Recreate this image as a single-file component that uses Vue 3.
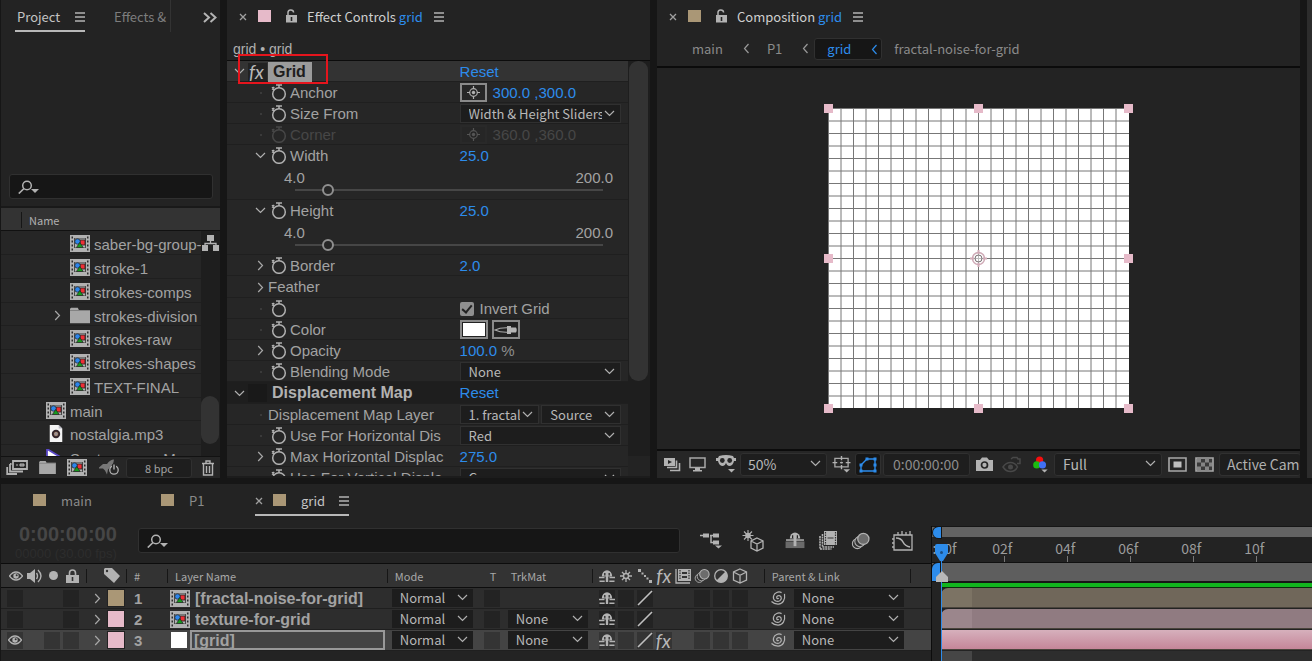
<script setup>
import { ref } from 'vue'

const files = [
  { name: 'saber-bg-group-', icon: 'comp', level: 2 },
  { name: 'stroke-1', icon: 'comp', level: 2 },
  { name: 'strokes-comps', icon: 'comp', level: 2 },
  { name: 'strokes-division', icon: 'folder', level: 2, twirl: true },
  { name: 'strokes-raw', icon: 'comp', level: 2 },
  { name: 'strokes-shapes', icon: 'comp', level: 2 },
  { name: 'TEXT-FINAL', icon: 'comp', level: 2 },
  { name: 'main', icon: 'comp', level: 1 },
  { name: 'nostalgia.mp3', icon: 'audio', level: 1 },
  { name: 'Spetsommer_Mum', icon: 'video', level: 1 }
]

const effects = [
  { label: 'Grid', kind: 'head', open: true, selected: true },
  { label: 'Anchor', kind: 'point', value: '300.0 ,300.0', watch: true },
  { label: 'Size From', kind: 'select', options: ['Width & Height Sliders'], watch: true },
  { label: 'Corner', kind: 'point', value: '360.0 ,360.0', watch: true, off: true },
  { label: 'Width', kind: 'slider', value: '25.0', watch: true, twirl: 'down' },
  { label: 'Height', kind: 'slider', value: '25.0', watch: true, twirl: 'down' },
  { label: 'Border', kind: 'number', value: '2.0', watch: true, twirl: 'right' },
  { label: 'Feather', kind: 'group', twirl: 'right' },
  { label: '', kind: 'check', value: 'Invert Grid', watch: true },
  { label: 'Color', kind: 'color', watch: true },
  { label: 'Opacity', kind: 'number', value: '100.0', unit: '%', watch: true, twirl: 'right' },
  { label: 'Blending Mode', kind: 'select', options: ['None'], watch: true },
  { label: 'Displacement Map', kind: 'head' },
  { label: 'Displacement Map Layer', kind: 'select', options: ['1. fractal-noise', 'Source'] },
  { label: 'Use For Horizontal Dis', kind: 'select', options: ['Red'], watch: true },
  { label: 'Max Horizontal Displac', kind: 'number', value: '275.0', watch: true, twirl: 'right' },
  { label: 'Use For Vertical Displa', kind: 'select', options: ['Green'], watch: true }
]

const layers = [
  { n: 1, name: '[fractal-noise-for-grid]', color: 'tan', matte: false },
  { n: 2, name: 'texture-for-grid', color: 'pink', matte: true },
  { n: 3, name: '[grid]', color: 'pink', matte: true, solid: true, active: true }
]

const gridLines = Array.from({ length: 24 }, (_, i) => i * 12.5)
const handles = [
  [4, 4], [154, 4], [304, 4], [4, 154], [304, 154], [4, 304], [154, 304], [304, 304]
]
const frames = ['02f', '04f', '06f', '08f', '10f']
const invert = ref(true)
const sliders = ref({ Width: 25, Height: 25 })
</script>

<template>
  <svg class="defs" aria-hidden="true">
    <symbol id="i-comp" viewBox="0 0 20 17">
      <rect width="20" height="17" fill="#b2b2b2" />
      <path d="M1.5 1.500h1.500v2h-1.500zM1.500 5.500h1.500v2h-1.500zM1.500 9.500h1.500v2h-1.500zM1.500 13.500h1.500v2h-1.500zM17 1.500h1.500v2h-1.500zM17 5.500h1.500v2h-1.500zM17 9.500h1.500v2h-1.500zM17 13.500h1.500v2h-1.500z" fill="#2c2c2c" />
      <path d="M4.500 3v10M15.500 3v10" stroke="#4a4a4a" />
      <path d="M5 3.500h10M5 12.500h10" stroke="#777" />
      <rect x="10" y="5" width="5" height="5" fill="#ee2f35" stroke="#222" stroke-width=".8" />
      <circle cx="7.500" cy="6.500" r="2.700" fill="#2d86ea" stroke="#222" stroke-width=".7" />
      <path d="M9.800 7.500 13.200 12.500H6.400z" fill="#159a1c" stroke="#222" stroke-width=".7" />
    </symbol>
    <symbol id="i-folder" viewBox="0 0 18 14">
      <path d="M1 0h6l1 2h10v12H0V1z" fill="#a8a8a8" />
      <path d="M0 2.500h18" stroke="#777" stroke-width=".7" />
    </symbol>
    <symbol id="i-audio" viewBox="0 0 20 19">
      <path d="M3 0h10l4 4v15H3z" fill="#f4f4f4" />
      <path d="M13 0v4h4z" fill="#b9b9c4" />
      <circle cx="10" cy="10" r="4.700" fill="#33252c" />
      <circle cx="10" cy="10" r="2.200" fill="#dcd5d8" stroke="#7d5a3f" stroke-width=".8" />
      <circle cx="10" cy="10" r=".8" fill="#33252c" />
    </symbol>
    <symbol id="i-video" viewBox="0 0 20 17">
      <path d="M1 0v17l15-8z" fill="#fff" stroke="#5a48c8" stroke-width="1.800" />
    </symbol>
    <symbol id="i-down" viewBox="0 0 11 7"><path d="M1 1l4.500 4.500L10 1" fill="none" stroke="currentColor" stroke-width="1.200" /></symbol>
    <symbol id="i-right" viewBox="0 0 7 11"><path d="M1.200 1l4.300 4.500L1.200 10" fill="none" stroke="currentColor" stroke-width="1.200" /></symbol>
    <symbol id="i-left" viewBox="0 0 7 11"><path d="M5.500 1L1.500 5.500 5.500 10" fill="none" stroke="currentColor" stroke-width="1.200" /></symbol>
    <symbol id="i-menu" viewBox="0 0 10 10"><path d="M0 1h10M0 5h10M0 9h10" stroke="currentColor" stroke-width="1.300" /></symbol>
    <symbol id="i-close" viewBox="0 0 8 8"><path d="M1 1l6 6M7 1L1 7" stroke="currentColor" stroke-width="1.300" /></symbol>
    <symbol id="i-search" viewBox="0 0 22 14">
      <circle cx="9" cy="5.500" r="4.300" fill="none" stroke="currentColor" stroke-width="1.500" />
      <path d="M6 8.500L.8 13.500" stroke="currentColor" stroke-width="1.700" />
      <path d="M13 9h8l-4 4z" fill="currentColor" />
    </symbol>
    <symbol id="i-unlock" viewBox="0 0 12 14">
      <path d="M3 6V4a2.800 2.800 0 0 1 5.600-.5" fill="none" stroke="currentColor" stroke-width="1.500" />
      <rect x="1" y="6" width="11" height="7.500" fill="currentColor" />
      <path d="M6.500 8v4" stroke="#232323" stroke-width="1.600" />
    </symbol>
    <symbol id="i-watch" viewBox="0 0 16 17">
      <circle cx="8" cy="10" r="6.300" fill="none" stroke="currentColor" stroke-width="1.500" />
      <path d="M5 .9h6M8 1v3M1 3.300l2.500 2.300M1 5.500l2.200-2.500" fill="none" stroke="currentColor" stroke-width="1.500" />
    </symbol>
    <symbol id="i-target" viewBox="0 0 15 15">
      <circle cx="7.500" cy="7.500" r="3.800" fill="none" stroke="currentColor" stroke-width="1.200" />
      <circle cx="7.500" cy="7.500" r="1.700" fill="currentColor" />
      <path d="M7.500 1v3M7.500 11v3M1 7.500h3M11 7.500h3" stroke="currentColor" stroke-width="1.200" />
    </symbol>
    <symbol id="i-eye" viewBox="0 0 14 10">
      <path d="M.5 5Q3.500 1 7 1t6.500 4Q10.500 9 7 9T.5 5z" fill="none" stroke="currentColor" stroke-width="1.300" />
      <circle cx="7" cy="5" r="2.700" fill="currentColor" />
      <circle cx="7.700" cy="4.300" r="1" fill="#333" />
    </symbol>
    <symbol id="i-shy" viewBox="0 0 16 13">
      <path d="M2.800 7a5.200 6.300 0 0 1 10.400 0z" fill="currentColor" />
      <path d="M0 8h5.500M10.500 8H16M.5 11.700h5.200M10.300 11.700h5.200" stroke="currentColor" stroke-width="1.400" />
      <path d="M8 6v6.500" stroke="currentColor" stroke-width="2.400" />
      <path d="M5.800 3.500v2.600M10.200 3.500v2.600" stroke="#303030" stroke-width="1.400" />
    </symbol>
    <symbol id="i-whip" viewBox="0 0 16 16">
      <path d="M8.800 8.300C7 9.600 5.600 7 7.800 5.800c3-1.200 4.700 2.500 2.400 4.600-3.200 2.600-7.600-.2-6.700-4.300C4.400 2.600 8.500 1 11.600 2.600M14.500 3.800c1 6-1.800 10.200-6.200 10.300-2.800.1-5.300-1.100-6.800-2.600" fill="none" stroke="currentColor" stroke-width="1.200" />
    </symbol>
    <symbol id="i-motion" viewBox="0 0 18 16">
      <circle cx="6" cy="10.500" r="4.700" fill="#333" stroke="currentColor" />
      <circle cx="8.500" cy="8.500" r="4.900" fill="#333" stroke="currentColor" />
      <circle cx="11.700" cy="6" r="5.300" fill="#6c6c6c" stroke="currentColor" stroke-width="1.200" />
    </symbol>
    <symbol id="i-cube" viewBox="0 0 16 16">
      <path d="M8 1l6.500 3v8L8 15l-6.500-3V4zM1.500 4L8 7.300 14.500 4M8 7.300V15" fill="none" stroke="currentColor" stroke-width="1.300" />
    </symbol>
  </svg>

  <main class="app">
    <div class="top">
      <section class="panel project" aria-label="Project">
        <nav class="tabs">
          <button class="tab on">Project <svg class="menu"><use href="#i-menu" /></svg></button>
          <button class="tab dim">Effects &amp;</button>
          <button class="more" aria-label="More panels">
            <svg viewBox="0 0 14 11"><path d="M1 1l5 4.500L1 10M7.500 1l5 4.500-5 4.500" fill="none" stroke="#b4b4b4" stroke-width="2" /></svg>
          </button>
        </nav>
        <label class="search psearch">
          <svg><use href="#i-search" /></svg>
          <input type="text" aria-label="Search project" />
        </label>
        <div class="phead"><span>Name</span></div>
        <div class="plist">
          <ul>
            <li v-for="f in files" :key="f.name" :class="'lv' + f.level">
              <span class="ptw"><svg v-if="f.twirl" class="right"><use href="#i-right" /></svg></span>
              <svg class="pic"><use :href="'#i-' + f.icon" /></svg>
              <span class="pname">{{ f.name }}</span>
            </li>
          </ul>
          <div class="pscroll">
            <svg class="flow" viewBox="0 0 17 16"><path d="M5 0h7v6H5zM0 10h6v6H0zM11 10h6v6h-6z" fill="#b2b2b2" /><path d="M8.500 6v2.500M3 11V8.500h11V11" fill="none" stroke="#b2b2b2" stroke-width="1.300" /></svg>
            <i class="pthumb"></i>
          </div>
        </div>
        <div class="pfoot">
          <button aria-label="Interpret footage"><svg class="w22" viewBox="0 0 22 16"><path d="M7 1.500h14v8H7z" fill="#262626" stroke="#b2b2b2" stroke-width="1.800" /><path d="M10 5.500h2M14 4.500h4v2h-4z" fill="#777" stroke="#b2b2b2" /><path d="M4 4.500h1.500M4 4.500V12h13M1.200 7.500v7H11" fill="none" stroke="#b2b2b2" stroke-width="1.800" /></svg></button>
          <button aria-label="New folder"><svg class="fold"><use href="#i-folder" /></svg></button>
          <button aria-label="New composition"><svg class="pic"><use href="#i-comp" /></svg></button>
          <button aria-label="Project settings"><svg class="w22" viewBox="0 0 22 16"><path d="M1 8l4-3.500h4Q12 0 16 0q0 4-3 7l-3 3-1 5-2-4-2-2-4 0z" fill="#777" /><circle cx="16" cy="10.500" r="4.200" fill="#262626" stroke="#b2b2b2" stroke-width="1.300" /><path d="M16 5v6" stroke="#262626" stroke-width="4" /><path d="M16 5v5" stroke="#b2b2b2" stroke-width="1.400" /></svg></button>
          <button class="bpc">8 bpc</button>
          <button aria-label="Delete"><svg class="trash" viewBox="0 0 14 16"><path d="M1 3.500h12M5 3V1h4v2M2.500 4v11h9V4M5.500 6v7M8.500 6v7" fill="none" stroke="#b2b2b2" stroke-width="1.400" /></svg></button>
        </div>
      </section>

      <section class="panel controls" aria-label="Effect Controls">
        <header class="title">
          <svg class="x"><use href="#i-close" /></svg><i class="sw pink"></i>
          <svg class="lock"><use href="#i-unlock" /></svg>
          <h2>Effect Controls <b>grid</b></h2>
          <svg class="menu"><use href="#i-menu" /></svg>
        </header>
        <p class="path">grid • grid</p>
        <div class="body">
          <div class="rows">
            <div v-for="(e, i) in effects" :key="i" class="row" :class="[e.kind, { off: e.off, selected: e.selected }]">
              <div class="lab">
                <template v-if="e.kind === 'head'">
                  <svg class="down"><use href="#i-down" /></svg>
                  <span class="fxbox"><em v-if="e.selected" class="fx">fx</em></span>
                  <strong>{{ e.label }}</strong>
                </template>
                <template v-else>
                  <span class="tw">
                    <svg v-if="e.twirl" :class="e.twirl"><use :href="'#i-' + e.twirl" /></svg>
                    <i v-else class="dot"></i>
                  </span>
                  <svg v-if="e.watch" class="watch"><use href="#i-watch" /></svg>
                  <span class="lt">{{ e.label }}</span>
                </template>
              </div>
              <div class="val">
                <button v-if="e.kind === 'head'" class="blue">Reset</button>
                <template v-else-if="e.kind === 'point'">
                  <button class="tgt" :aria-label="e.label + ' point'"><svg><use href="#i-target" /></svg></button>
                  <span class="blue">{{ e.value }}</span>
                </template>
                <template v-else-if="e.kind === 'select'">
                  <span v-for="o in e.options" :key="o" class="drop">
                    <select :aria-label="e.label"><option>{{ o }}</option></select>
                    <svg class="down"><use href="#i-down" /></svg>
                  </span>
                </template>
                <label v-else-if="e.kind === 'check'" class="chk"><input v-model="invert" type="checkbox" />{{ e.value }}</label>
                <template v-else-if="e.kind === 'color'">
                  <button class="chip" aria-label="Color"></button>
                  <button class="chip drp" aria-label="Eyedropper"><svg viewBox="0 0 24 10"><path d="M1 5q5-2.500 13-2.200v4.400Q6 7.500 1 5z" fill="none" stroke="#aaa" stroke-width="1.200" /><path d="M13 1h4v1.500h5q1.500 2.500 0 5h-5V9h-4z" fill="#b5b5b5" /></svg></button>
                </template>
                <template v-else><span class="blue">{{ e.value }}</span><span v-if="e.unit" class="unit">{{ e.unit }}</span></template>
              </div>
              <div v-if="e.kind === 'slider'" class="slide">
                <span>4.0</span><span>200.0</span>
                <input v-model="sliders[e.label]" type="range" min="4" max="200" :aria-label="e.label" />
              </div>
            </div>
          </div>
          <div class="escroll"><i></i></div>
        </div>
        <div class="mark"></div>
      </section>

      <section class="panel comp" aria-label="Composition">
        <header class="title">
          <svg class="x"><use href="#i-close" /></svg><i class="sw tan"></i>
          <svg class="lock"><use href="#i-unlock" /></svg>
          <h2>Composition <b>grid</b></h2>
          <svg class="menu"><use href="#i-menu" /></svg>
        </header>
        <nav class="crumbs">
          <a href="#main">main</a><svg><use href="#i-left" /></svg>
          <a href="#p1">P1</a><svg class="last"><use href="#i-left" /></svg>
          <a href="#grid" class="cur">grid<svg><use href="#i-left" /></svg></a>
          <a href="#noise">fractal-noise-for-grid</a>
        </nav>
        <div class="view">
          <svg class="canvas" viewBox="0 0 309 309">
            <rect x="4" y="4" width="301" height="300" fill="#fff" />
            <g v-for="g in gridLines" :key="g">
              <path :d="`M${g + 4.5} 4v300M4 ${g + 4.5}h301`" stroke="#777" />
            </g>
            <rect v-for="(h, i) in handles" :key="i" :x="h[0] - 4" :y="h[1] - 4" width="9" height="9" fill="#e6bac9" />
            <g fill="none" stroke="#cfaab6">
              <circle cx="154.500" cy="154.500" r="6" fill="#fff" fill-opacity=".5" stroke-width="1.500" />
              <circle cx="154.500" cy="154.500" r="3.500" stroke="#776d70" />
              <path d="M154.500 146v4M154.500 159v4M146 154.500h4M159 154.500h4" stroke-width="2" />
            </g>
          </svg>
        </div>
        <div class="vfoot">
          <svg class="w17" viewBox="0 0 17 15"><path d="M0 1h11v8H0z" fill="#b2b2b2" /><path d="M4 3l4 2-4 2z" fill="#262626" /><path d="M12.500 3.500v7H3M15.500 6v7.500H6" fill="none" stroke="#b2b2b2" stroke-width="1.600" /></svg>
          <svg class="w17" viewBox="0 0 17 15"><path d="M1 1h15v9.500H1z" fill="none" stroke="#a8a8a8" stroke-width="1.500" /><path d="M6 11h5v2h2v1.500H4V13h2z" fill="#b2b2b2" /></svg>
          <svg class="w20" viewBox="0 0 20 18"><path d="M3 1q7-2 14 0l1 2h2v3h-2q-1 5-5 5-2 0-3-3-1 3-3 3-4 0-5-5H0V3h2z" fill="#b2b2b2" /><circle cx="6.300" cy="5.500" r="2.400" fill="#262626" /><circle cx="13.700" cy="5.500" r="2.400" fill="#262626" /><path d="M12 14h7l-3.500 3.500z" fill="#b2b2b2" /></svg>
          <span class="vdrop zoom"><select aria-label="Magnification"><option>50%</option></select><svg class="down"><use href="#i-down" /></svg></span>
          <svg class="w19" viewBox="0 0 19 18"><path d="M2.500 2.500h14v9h-14z" fill="none" stroke="#a8a8a8" stroke-width="1.400" /><path d="M9.500 0v4.500M9.500 6v2M9.500 9.500V14M0 7h5M8 7h3M14 7h5" stroke="#b2b2b2" stroke-width="1.500" /><path d="M11.500 14h7L15 17.500z" fill="#b2b2b2" /></svg>
          <button class="mask" aria-label="Mask visibility"><svg viewBox="0 0 18 16"><path d="M2 14V8l6-6h8v12z" fill="none" stroke="#2d8ceb" stroke-width="1.400" /><path d="M.5 6.500h3v3h-3zM.5 12.500h3v3h-3zM6.500.5h3v3h-3zM14.500.5h3v3h-3zM14.500 12.500h3v3h-3zM14.500 6.500h3v3h-3z" fill="#2d8ceb" /></svg></button>
          <button class="time">0:00:00:00</button>
          <svg class="w19 cam" viewBox="0 0 19 15"><path d="M1 3h4l2-2.500h5L14 3h4v11H1z" fill="#b2b2b2" /><circle cx="9.500" cy="8" r="3" fill="none" stroke="#262626" stroke-width="1.700" /></svg>
          <svg class="w19 ghost" viewBox="0 0 19 16"><path d="M1 10.500Q4 6 8.500 6t7 4.500Q13 15 8.500 15T1 10.500z" fill="none" stroke="#484848" stroke-width="1.500" /><circle cx="8.500" cy="10.500" r="2.500" fill="#484848" /><path d="M9 2.500l2-1.500h4l1 1.500h2V7h-3" fill="none" stroke="#484848" stroke-width="1.500" /></svg>
          <svg class="w17" viewBox="0 0 17 19"><circle cx="7.500" cy="4.500" r="4" fill="#f60e0e" /><circle cx="4.300" cy="10" r="4" fill="#1dbb10" /><circle cx="10.700" cy="10" r="4" fill="#4070f4" /><path d="M9.500 15h7L13 18.500z" fill="#b2b2b2" /></svg>
          <span class="vdrop full"><select aria-label="Resolution"><option>Full</option></select><svg class="down"><use href="#i-down" /></svg></span>
          <svg class="w19" viewBox="0 0 19 16"><path d="M1 1.500h17v13H1z" fill="none" stroke="#a8a8a8" stroke-width="1.600" /><path d="M5.500 5h8v6h-8z" fill="#c0c0c0" /></svg>
          <svg class="w19" viewBox="0 0 19 16"><path d="M1 1.500h17v13H1z" fill="#3a3a3a" stroke="#a8a8a8" stroke-width="1.600" /><path d="M2 2h4v4H2zM10 2h4v4h-4zM6 6h4v4H6zM14 6h3v4h-3zM2 10h4v4H2zM10 10h4v4h-4z" fill="#858585" /></svg>
          <button class="camera">Active Camera</button>
        </div>
      </section>
      <aside class="panel sliver"></aside>
    </div>

    <section class="panel timeline" aria-label="Timeline">
      <nav class="ttabs">
        <button class="t1"><i class="sw tan"></i>main</button>
        <button class="t2"><i class="sw tan"></i>P1</button>
        <button class="t3 on"><svg class="x"><use href="#i-close" /></svg><i class="sw tan"></i>grid<svg class="menu"><use href="#i-menu" /></svg></button>
      </nav>
      <div class="tmain">
        <div class="tleft">
          <div class="tbar">
            <div class="clock"><strong>0:00:00:00</strong><small>00000 (30.00 fps)</small></div>
            <label class="search tsearch"><svg><use href="#i-search" /></svg><input type="text" aria-label="Search layers" /></label>
            <div class="tools">
              <svg class="w22" viewBox="0 0 22 16"><path d="M0 3h4M10 3h4M11 3v7h3" fill="none" stroke="#b2b2b2" stroke-width="1.500" /><path d="M3 1h6v4H3zM13 1h6v4h-6zM13 8h6v4h-6zM15 13h7l-3.500 3z" fill="#b2b2b2" /></svg>
              <svg class="cubes" viewBox="0 0 22 22"><path d="M6 0v11M.5 5.500h11M2 1.500l8 8M10 1.500l-8 8" stroke="#b2b2b2" stroke-width="1.100" /><circle cx="6" cy="5.500" r="2.800" fill="#b2b2b2" /><path d="M15 8l6 3v7l-6 3-6-3v-7zM9 11l6 3 6-3M15 14v7" fill="#232323" stroke="#b2b2b2" stroke-width="1.300" /></svg>
              <svg class="w22" viewBox="0 0 22 18"><path d="M1 10h20v7H1z" fill="#6a6a6a" /><path d="M5.500 7a5.500 6.500 0 0 1 11 0z" fill="#b2b2b2" /><path d="M1.500 8.500h19" stroke="#b2b2b2" stroke-width="1.600" /><path d="M11 6v9" stroke="#b2b2b2" stroke-width="3" /><path d="M8.500 3.500v3M13.500 3.500v3" stroke="#232323" stroke-width="1.300" /></svg>
              <svg class="films" viewBox="0 0 18 19"><rect x="5" width="13" height="14" fill="#b2b2b2" /><path d="M6.500 1v13M16.500 1v13" stroke="#333" stroke-width="1.200" stroke-dasharray="1.500 1" /><path d="M8.500 7h6" stroke="#333" /><path d="M3.500 3v13H15M1 5v13h11.500" fill="none" stroke="#b2b2b2" stroke-width="1.600" stroke-dasharray="2 .6" /></svg>
              <svg class="blur"><use href="#i-motion" /></svg>
              <svg class="graph" viewBox="0 0 22 20"><path d="M2 4h18v15H2zM0 8h2M0 12h2M0 16h2M6 1v3M10 0v4M14 1v3M18 0v4" fill="none" stroke="#b2b2b2" stroke-width="1.300" /><path d="M4 7q5 0 7 4t7 5" fill="none" stroke="#b2b2b2" stroke-width="1.600" /></svg>
            </div>
          </div>
          <table>
            <thead>
              <tr>
                <th class="av">
                  <svg class="eye"><use href="#i-eye" /></svg>
                  <svg class="spk" viewBox="0 0 16 14"><path d="M0 4h3l5-4v14l-5-4H0z" fill="#b2b2b2" /><path d="M9.500 4q2 3 0 6M11 1q6 6 0 12" fill="none" stroke="#b2b2b2" stroke-width="1.400" /></svg>
                  <i class="solo"></i>
                  <svg class="plock" viewBox="0 0 13 14"><path d="M3.500 6V4a3 3 0 0 1 6 0v2" fill="none" stroke="#b2b2b2" stroke-width="1.600" /><path d="M0 6h13v8H0z" fill="#b2b2b2" /><path d="M6.500 8v4" stroke="#333" stroke-width="1.600" /></svg>
                </th>
                <th class="sep"><svg class="tag" viewBox="0 0 16 15"><path d="M0 1l1-1h7l8 8-6 7-10-9z" fill="#b2b2b2" /><circle cx="3" cy="3" r="1.200" fill="#333" /></svg></th>
                <th class="sep num">#</th>
                <th class="sep">Layer Name</th>
                <th class="sep">Mode</th>
                <th class="mid">T</th>
                <th>TrkMat</th>
                <th class="sep sws">
                  <svg><use href="#i-shy" /></svg>
                  <svg viewBox="0 0 16 16"><circle cx="8" cy="8" r="2.500" fill="none" stroke="#b2b2b2" stroke-width="1.400" /><path d="M8 2v3M8 11v3M2 8h3M11 8h3M4 4l2 2M10 10l2 2M12 4l-2 2M6 10l-2 2" stroke="#b2b2b2" stroke-width="1.300" /></svg>
                  <svg viewBox="0 0 16 16"><path d="M1 1h3v3H1zM4.500 4.500h2v2h-2zM7 7h2v2H7zM9.500 9.500h2v2h-2zM12 12h3v3h-3z" fill="#b2b2b2" /></svg>
                  <em class="fx">fx</em>
                  <svg viewBox="0 0 16 16"><path d="M1 1v14h14" fill="none" stroke="#b2b2b2" stroke-width="1.300" /><path d="M3 1h13v12H3z" fill="#b2b2b2" /><path d="M5 2v10M14 2v10" stroke="#333" stroke-dasharray="1.500 1" stroke-width="1.200" /><path d="M7 4h5v2H7zM7 8h5v2H7z" fill="#333" /></svg>
                  <svg><use href="#i-motion" /></svg>
                  <svg viewBox="0 0 16 16"><circle cx="8" cy="8" r="6.300" fill="none" stroke="#b2b2b2" stroke-width="1.300" /><path d="M12.500 3.500a6.300 6.300 0 1 1-9 9z" fill="#b2b2b2" /></svg>
                  <svg><use href="#i-cube" /></svg>
                </th>
                <th class="sep">Parent &amp; Link</th>
                <th class="sep"></th>
              </tr>
            </thead>
            <tbody>
              <tr v-for="l in layers" :key="l.n" :class="{ active: l.active }">
                <td class="avb"><i class="box"><svg v-if="l.active" class="eye"><use href="#i-eye" /></svg></i><i class="box" :class="{ none: !l.active }"></i><i class="box"></i></td>
                <td class="tsw"><svg class="right"><use href="#i-right" /></svg><i class="lsw" :class="l.color"></i></td>
                <td class="n">{{ l.n }}</td>
                <td class="lname"><i v-if="l.solid" class="solid"></i><svg v-else class="pic"><use href="#i-comp" /></svg><span>{{ l.name }}</span></td>
                <td><span class="drop"><select aria-label="Mode"><option>Normal</option></select><svg class="down"><use href="#i-down" /></svg></span></td>
                <td><i class="box"></i></td>
                <td><span v-if="l.matte" class="drop"><select aria-label="Track matte"><option>None</option></select><svg class="down"><use href="#i-down" /></svg></span></td>
                <td class="sws">
                  <i class="box"><svg><use href="#i-shy" /></svg></i><i class="box"></i>
                  <i class="box"><svg viewBox="0 0 16 16"><path d="M1 15L15 1" stroke="#c0c0c0" stroke-width="1.600" /></svg></i>
                  <i class="box" :class="{ none: !l.active }"><em v-if="l.active" class="fx">fx</em></i><i class="box none"></i>
                  <i class="box"></i><i class="box"></i><i class="box"></i>
                </td>
                <td class="par"><svg class="whip"><use href="#i-whip" /></svg><span class="drop"><select aria-label="Parent"><option>None</option></select><svg class="down"><use href="#i-down" /></svg></span></td>
                <td></td>
              </tr>
            </tbody>
          </table>
        </div>

        <div class="tright">
          <div class="navbar"><i></i></div>
          <div class="ruler"><span class="zero">0:00f</span><span v-for="f in frames" :key="f" class="fr">{{ f }}</span></div>
          <div class="work"><i></i></div>
          <div class="green"></div>
          <div class="bar b1"></div>
          <div class="bar b2"></div>
          <div class="bar b3"></div>
          <div class="rest"></div>
          <svg class="phead-icon" viewBox="0 0 13 18"><path d="M0 2q0-2 2-2h9q2 0 2 2v7l-5 8H5L0 9z" fill="#2d8ceb" /><circle cx="6.500" cy="8.500" r="1.500" fill="#1b4f86" /></svg>
          <i class="playline"></i>
          <svg class="pin" viewBox="0 0 12 11"><path d="M0 6l6-6 6 6v5H0z" fill="#b8b8b8" /></svg>
        </div>
      </div>
    </section>
  </main>
</template>

<style>
body { margin: 0; background: #161616; }
</style>

<style scoped>
* { box-sizing: border-box; }
.defs { position: absolute; width: 0; height: 0; }
.app { display: flex; flex-direction: column; gap: 6px; height: 100vh; min-height: 400px; padding-left: 1px; overflow: hidden; background: #161616; color: #a2a2a2; font: 13px/20px "Noto Sans CJK SC", "Noto Sans", sans-serif; }
button, input, select { font: inherit; color: inherit; background: none; border: 0; margin: 0; padding: 0; border-radius: 0; text-align: left; }
button { white-space: nowrap; }
svg { display: block; flex: none; }
.top { flex: 1; min-height: 0; display: grid; grid-template-columns: 219fr 423fr 643fr 5px; gap: 7px; }
.panel { background: #232323; min-width: 0; min-height: 0; position: relative; }
.top > .panel { display: flex; flex-direction: column; overflow: hidden; }
.menu { width: 10px; height: 10px; color: #b2b2b2; }
.x { width: 8px; height: 8px; color: #a0a0a0; }
.down { width: 11px; height: 7px; color: #b0b0b0; }
.right { width: 7px; height: 11px; color: #a8a8a8; }
.sw { width: 13px; height: 12px; }
.pink { background: #e6bac9; }
.tan { background: #aa9776; }
.w22 { width: 22px; height: 17px; }
.w20 { width: 20px; height: 18px; }
.w19 { width: 19px; height: 17px; }
.w17 { width: 17px; height: 17px; }
.pic { width: 20px; height: 17px; }
.fx { font: italic 19px/18px Lato, sans-serif; color: #b8b8b8; }
.drop, .vdrop { position: relative; display: flex; min-width: 0; background: #1d1d1d; color: #b8b8b8; }
select { appearance: none; width: 100%; outline: 0; overflow: hidden; }
.drop .down, .vdrop .down { position: absolute; right: 5px; top: 50%; margin-top: -4px; pointer-events: none; }

/* project */
.tabs { display: flex; height: 36px; padding-left: 14px; align-items: flex-start; }
.tab { height: 32px; padding: 2px 0 0 2px; display: flex; align-items: center; }
.tab.on { justify-content: space-between; border-bottom: 2px solid #b8b8b8; color: #c4c4c4; width: 70px; padding-top: 4px; }
.tab.dim { color: #7d7d7d; margin-left: 27px; padding-right: 4px; border-right: 1px solid #333; }
.more { margin: 12px 3px 0 auto; }
.more svg { width: 14px; height: 11px; }
.search { display: flex; align-items: center; background: #161616; border: 1px solid #303030; border-radius: 3px; height: 25px; padding: 0 8px; gap: 6px; color: #b2b2b2; }
.search svg { width: 22px; height: 14px; }
.search input { flex: 1; min-width: 0; outline: 0; }
.psearch { margin: 138px 7px 7px 8px; }
.phead { height: 25px; background: #333; border-top: 2px solid #191919; border-bottom: 1px solid #111; padding: 4px 20px; font-size: 11px; line-height: 16px; color: #b0b0b0; }
.phead span { display: block; border-left: 1px solid #161616; padding-left: 7px; }
.plist { flex: 1; min-height: 0; display: flex; font: 15px/22px "Liberation Sans", Arial, sans-serif; border-bottom: 1px solid #121212; }
.plist ul { flex: 1; min-width: 0; margin: 0; padding: 0; list-style: none; overflow: hidden; background: #262626; }
.plist li { height: 24px; display: flex; align-items: flex-start; border-bottom: 1px solid #1f1f1f; white-space: nowrap; overflow: hidden; }
.plist li:nth-child(4n) { height: 23px; }
.plist .pic { margin: 4px 4px 0 0; }
.pname { padding-top: 3px; }
.ptw { width: 69px; padding: 7px 0 0 53px; flex: none; }
.lv1 .ptw { width: 45px; padding-left: 0; }
.pscroll { width: 19px; background: #1e1e1e; display: flex; flex-direction: column; justify-content: space-between; }
.flow { width: 17px; height: 16px; margin: 4px 1px; }
.pthumb { width: 18px; height: 48px; margin: 0 1px 12px 0; border-radius: 9px; background: #333; }
.pfoot { height: 21px; display: flex; align-items: center; gap: 11px; padding: 0 5px; background: #262626; }
.fold { width: 17px; height: 13px; }
.bpc { flex: 1; height: 20px; margin: 0 -2px 0 -5px; background: #1e1e1e; border: 1px solid #303030; border-radius: 3px; text-align: center; font-size: 11px; line-height: 16px; }
.trash { width: 14px; height: 16px; }

/* shared titles */
.title { display: flex; align-items: center; height: 36px; flex: none; padding: 0 0 2px 12px; }
.title .sw { margin: 0 14px 3px 11px; }
.title .lock { width: 12px; height: 14px; color: #b2b2b2; margin: 0 10px 2px 0; }
.title h2 { margin: 0 11px 0 0; font-size: 13px; font-weight: 400; color: #cfcfcf; white-space: nowrap; }
.title b { font-weight: 400; color: #2d8ceb; }

/* effect controls */
.path { margin: 0; flex: none; height: 25px; padding: 3px 6px; font: 14px/20px "Liberation Sans", Arial, sans-serif; color: #b0b0b0; border-bottom: 1px solid #0c0c0c; }
.body { flex: 1; min-height: 0; display: flex; font: 15px/20px "Liberation Sans", Arial, sans-serif; border-bottom: 2px solid #1c1c1c; }
.rows { flex: 1; min-width: 0; overflow: hidden; }
.row { display: grid; grid-template-columns: 58% minmax(0, 1fr); grid-template-rows: 21px; background: #262626; box-shadow: inset 0 -1px #1f1f1f; }
.row.slider { grid-template-rows: 21px 34px; }
.row.head { background: #1e1e1e; grid-template-rows: 22px; color: #b2b2b2; }
.row.group { grid-template-rows: 22px; }
.row.selected { background: #333; grid-template-rows: 21px; }
.lab { display: flex; min-width: 0; overflow: hidden; white-space: nowrap; }
.tw { width: 41px; flex: none; display: flex; justify-content: center; align-items: center; padding-left: 26px; }
.dot { width: 2px; height: 2px; background: #3a3a3a; }
.watch { width: 16px; height: 17px; margin: 2px 0 0 3px; color: #b0b0b0; }
.watch + .lt { margin-left: 3px; }
.lt { padding-top: 1px; min-width: 0; }
.head .lab { align-items: center; padding-left: 7px; }
.fxbox { width: 19px; height: 18px; background: #191919; margin: 0 1px 0 3px; }
.fxbox .fx { display: block; padding-left: 1px; }
.head strong { padding: 0 4px; font-size: 16px; line-height: 20px; }
.selected .fxbox { background: #222; }
.selected strong { background: #9b9b9b; color: #1e1e1e; padding: 0 6px 0 5px; }
.val { display: flex; align-items: center; min-width: 0; white-space: nowrap; }
.blue { color: #2d8ceb; }
.off .lab, .off .watch, .off .blue { color: #474747; }
.tgt { width: 27px; height: 19px; border: 2px solid #8a8a8a; display: grid; place-items: center; margin-right: 6px; }
.tgt svg { width: 15px; height: 15px; color: #b0b0b0; }
.off .tgt { border-color: #292929; }
.off .tgt svg { color: #555; }
.val .drop { flex: 1; height: 19px; border: 1px solid #303030; margin-right: 7px; font: 13px/17px "Noto Sans CJK SC", sans-serif; }
.val .drop + .drop { margin-left: -5px; }
.val select { height: 17px; padding: 0 18px 0 8px; text-overflow: clip; }
.chk { display: flex; align-items: center; gap: 6px; color: #a2a2a2; padding-top: 1px; }
.chk input { appearance: none; width: 14px; height: 14px; border-radius: 2px; background: #8f8f8f; display: grid; place-items: center; }
.chk input:checked::after { content: ""; width: 4px; height: 8px; border: solid #222; border-width: 0 2px 2px 0; transform: rotate(40deg); margin-top: -2px; }
.chip { width: 28px; height: 19px; border: 2px solid #8a8a8a; background: #fff; margin-right: 4px; box-shadow: inset 0 0 0 1px #222; }
.drp { background: #222; }
.drp svg { width: 24px; height: 10px; }
.unit { margin-left: 4px; color: #8f8f8f; }
.slide { grid-column: 1 / -1; display: grid; grid-template-columns: 1fr 1fr; align-content: start; padding: 2px 15px 0 57px; }
.slide span:nth-child(2) { text-align: right; }
.slide input { grid-column: 1 / -1; appearance: none; height: 12px; margin: -4px 4px 0 5px; background: linear-gradient(#464646, #464646) no-repeat center / calc(100% - 12px) 2px; min-width: 0; }
.slide input::-webkit-slider-thumb { appearance: none; width: 12px; height: 12px; border: 2px solid #8f8f8f; border-radius: 50%; background: #262626; }
.escroll { width: 22px; background: #1e1e1e; padding: 0 2px 0 1px; margin-bottom: 20px; }
.escroll i { display: block; height: 320px; border-radius: 9px; background: #333; }
.mark { position: absolute; left: 11px; top: 54px; width: 90px; height: 30px; border: 2px solid #e5151d; }

/* composition */
.crumbs { height: 32px; display: flex; align-items: flex-start; padding: 3px 0 0 35px; flex: none; border-bottom: 2px solid #0b0b0b; }
.crumbs a { color: #8a8a8a; text-decoration: none; white-space: nowrap; }
.crumbs svg { width: 7px; height: 11px; margin: 4px 17px 0 20px; color: #999; }
.crumbs svg.last { margin-right: 5px; }
.crumbs .cur { display: flex; background: #161616; border: 1px solid #303030; border-radius: 3px; color: #2d8ceb; padding: 0 3px 0 12px; margin: -1px 12px 0 0; }
.crumbs .cur svg { color: #2d8ceb; margin: 5px 0 0 20px; }
.view { flex: 1; min-height: 0; display: grid; place-items: center; overflow: hidden; }
.canvas { width: 309px; height: 309px; }
.vfoot { height: 29px; flex: none; display: flex; align-items: center; border-top: 2px solid #0c0c0c; background: #262626; padding: 0 0 1px 7px; gap: 8px; overflow: hidden; font-size: 14px; color: #b0b0b0; }
.vdrop, .time, .camera { height: 23px; border: 1px solid #303030; border-radius: 3px; background: #1e1e1e; }
.vdrop select { padding: 0 20px 0 7px; }
.w20 { margin-left: 2px; }
.zoom { width: 87px; margin-left: -4px; margin-right: -3px; }
.mask { width: 26px; height: 23px; background: #161616; border: 1px solid #303030; border-radius: 3px; padding: 3px; margin-left: -4px; }
.mask svg { width: 18px; height: 16px; }
.time { width: 87px; margin-left: -6px; margin-right: -3px; padding: 0 9px; color: #8c8c8c; }
.ghost { margin-right: 3px; }
.full { width: 108px; margin: 0 -2px 0 -3px; }
.full select { padding-left: 8px; }
.camera { flex: 1; min-width: 0; overflow: hidden; padding-left: 7px; margin-left: -3px; border-right: 0; }
.sliver { background: #2c2c2c; }

/* timeline */
.timeline { flex: none; }
.ttabs { display: flex; height: 44px; padding-left: 32px; color: #8a8a8a; }
.ttabs button { height: 32px; display: flex; align-items: center; padding: 2px 0 0; }
.ttabs .sw { margin: 0 15px 2px 0; }
.t1 { width: 128px; }
.t2 { width: 94px; }
.ttabs .on { color: #c4c4c4; border-bottom: 2px solid #b8b8b8; padding-top: 4px; }
.ttabs .t3 .sw { margin-left: 10px; }
.t3 .menu { margin-left: 14px; }
.tmain { display: flex; }
.tleft { flex: 0 0 71%; min-width: 0; }
.tbar { height: 36px; display: flex; align-items: flex-start; border-bottom: 1px solid #0c0c0c; }
.clock { width: 137px; flex: none; font-family: "Liberation Sans", Arial, sans-serif; color: #464646; white-space: nowrap; }
.clock strong { display: block; font-size: 20px; line-height: 12px; padding-left: 18px; }
.clock small { display: block; font-size: 13px; line-height: 20px; padding: 4px 0 0 14px; height: 23px; color: #2d2d2d; }
.tsearch { flex: 1; }
.tools { display: flex; gap: 20px; align-items: center; padding: 0 18px 0 20px; height: 25px; color: #b2b2b2; }
.cubes { width: 22px; height: 22px; }
.films { width: 18px; height: 19px; margin: 0 -6px 0 -7px; }
.blur { width: 19px; height: 18px; }
.graph { width: 22px; height: 20px; margin-left: 2px; }
table, thead, tbody { display: block; }
tr { display: grid; grid-template-columns: 85px 40px 41px minmax(120px, 1fr) 92px 24px 89px 172px 146px 22px; height: 21px; background: #2d2d2d; border-bottom: 1px solid #1f1f1f; }
thead tr { height: 24px; background: #333; border-bottom: 1px solid #0d0d0d; }
th, td { display: flex; align-items: center; padding: 0; min-width: 0; white-space: nowrap; }
th { font-weight: 400; font-size: 11px; line-height: 16px; color: #a8a8a8; padding-left: 8px; }
th.sep { background: linear-gradient(#161616, #161616) no-repeat 0 5px / 1px 14px; }
th.mid { padding-left: 11px; }
.eye { width: 14px; height: 10px; color: #b2b2b2; }
.spk { width: 16px; height: 14px; margin-left: 4px; }
.solo { width: 9px; height: 9px; border-radius: 50%; background: #b2b2b2; margin: 0 8px 0 6px; }
.plock { width: 13px; height: 14px; }
.tag { width: 16px; height: 15px; margin-left: 10px; }
.box { display: grid; place-items: center; width: 16px; height: 17px; background: #232323; flex: none; }
.avb { padding-left: 6px; gap: 3px; }
.avb .box:nth-child(2) { margin-left: 18px; }
.tsw { padding-left: 8px; gap: 7px; color: #999; }
.lsw { width: 16px; height: 16px; box-shadow: 0 0 0 1px #222; }
.n { padding-left: 8px; font: bold 15px/19px "Liberation Sans", Arial, sans-serif; }
.lname { padding-left: 3px; font: bold 16px/18px "Liberation Sans", Arial, sans-serif; gap: 5px; }
.lname span { flex: 1; min-width: 0; overflow: hidden; padding-top: 2px; }
.solid { width: 16px; height: 16px; background: #fff; margin-left: 1px; }
.active .lname { gap: 3px; }
.active .lname span { border: 2px solid #999; padding: 0 2px; line-height: 17px; height: 20px; margin-right: 2px; }
.active { background: #444; }
.active .box { background: #343434; }
.box.none, .active .box.none { background: none; }
td .drop { flex: 1; line-height: 18px; height: 18px; margin: 0 6px 0 5px; }
td .drop select { padding: 0 20px 0 8px; height: 18px; }
td:nth-child(6) { padding-left: 5px; }
td:nth-child(7) .drop { margin: 0 4px 0 5px; }
.sws.sws { padding-left: 7px; gap: 3px; }
.sws svg { width: 16px; height: 16px; color: #b2b2b2; }
.sws .fx { width: 16px; }
.par { padding-left: 6px; }
.par .drop { margin: 0 6px 0 8px; }
.whip { width: 16px; height: 16px; color: #b2b2b2; }
.tright { flex: 1; min-width: 0; position: relative; overflow: hidden; border-left: 1px solid #0c0c0c; margin: -2px 0 0 -1px; }
.navbar { height: 11px; padding-left: 1px; background: #636363; border-top: 1px solid #161616; display: flex; }
.navbar i { width: 8px; height: 11px; border-radius: 6px 0 0 6px; background: #2d8ceb; box-shadow: 0 0 0 1px #161616; }
.ruler { height: 26px; display: flex; font-size: 14px; line-height: 22px; overflow: hidden; color: #9c9c9c; border-bottom: 1px solid #111; }
.zero { width: 39px; flex: none; text-indent: -7px; }
.fr { width: 63px; flex: none; text-align: center; background: linear-gradient(#777, #777) no-repeat 33px bottom / 1px 6px; }
.work { height: 19px; background: #5e5e5e; border-bottom: 1px solid #161616; }
.work i { display: block; width: 8px; height: 18px; border-radius: 6px 0 0 0; background: #2d8ceb; box-shadow: 0 0 0 1px #161616; }
.green { height: 6px; margin-left: 9px; background: #12b51e; border-top: 1px solid #161616; border-bottom: 1px solid #0d2a0e; }
.bar { height: 20px; margin: 0 0 1px 9px; border-bottom: 1px solid #4a443c; border-radius: 7px 0 0 0; }
.b1 { background: linear-gradient(90deg, #7c7364 31px, #70675a 31px); }
.b2 { background: linear-gradient(90deg, #9b868c 31px, #907b81 31px); }
.b3 { background: linear-gradient(#d6b0bc, #c58699); border-radius: 0; }
.rest { height: 10px; margin-left: 9px; background: linear-gradient(90deg, #464646 31px, #2d2d2d 31px); }
.phead-icon { position: absolute; left: 3px; top: 18px; width: 13px; height: 18px; }
.playline { position: absolute; left: 9px; top: 30px; bottom: 0; width: 1px; background: #2d8ceb; }
.pin { position: absolute; left: 4px; top: 45px; width: 12px; height: 11px; }
</style>
